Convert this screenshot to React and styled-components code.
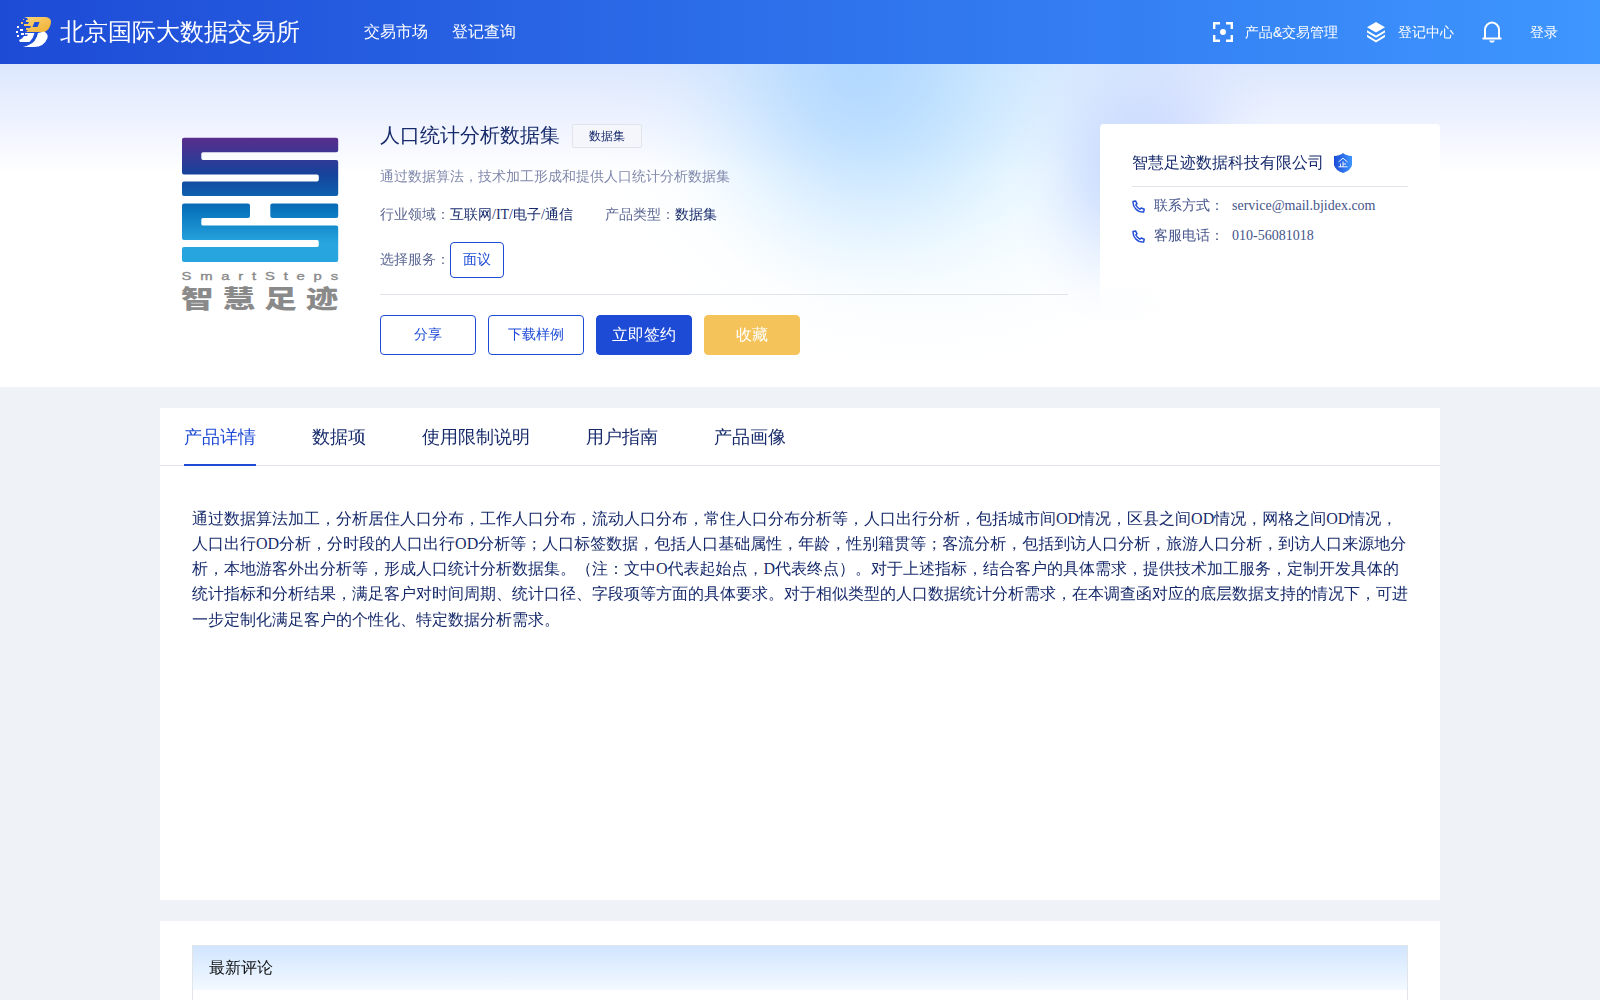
import React, { useState } from "react"
import styled, { createGlobalStyle } from "styled-components"

const GlobalStyle = createGlobalStyle`
  * {
    box-sizing: border-box;
  }
  body {
    margin: 0;
    background: #eff3f8;
    color: #172b6b;
    font-family: "Liberation Serif", "Droid Sans Fallback", "WenQuanYi Zen Hei",
      "Noto Sans CJK SC", serif;
    font-size: 14px;
    line-height: 22px;
    text-spacing-trim: space-all;
    overflow: hidden;
  }
  button {
    font-family: inherit;
    cursor: pointer;
  }
`

const tabs = ["产品详情", "数据项", "使用限制说明", "用户指南", "产品画像"]

const contacts = [
  { label: "联系方式：", value: "service@mail.bjidex.com" },
  { label: "客服电话：", value: "010-56081018" },
]

// soft spot of light with a bell-shaped falloff
const glow = (size, position, rgb, alpha) => {
  const stops = [1, 0.92, 0.76, 0.55, 0.34, 0.17, 0.06, 0]
    .map((k, i) => `rgba(${rgb}, ${k * alpha}) ${(i * 100) / 7}%`)
    .join(", ")
  return `radial-gradient(ellipse ${size} at ${position}, ${stops})`
}

const BrandLogo = () => (
  <svg width="36" height="32" viewBox="0 0 36 32">
    <defs>
      <linearGradient id="gold" x1="0" y1="0" x2="1" y2="1">
        <stop offset="0" stopColor="#f9d47a" />
        <stop offset="1" stopColor="#f0b030" />
      </linearGradient>
    </defs>
    <path
      fill="url(#gold)"
      fillRule="evenodd"
      d="M8 1H28Q35.500 1 35 6.500Q34 14 28 16H10L12 14H10V12H14L15 10H8V8H12L13 6H10V4H12L11 2ZM18.500 6L16.500 11H21.500L23.500 6Z"
    />
    <path
      fill="#fff"
      d="M9 17H18.500Q17.500 22 13.500 26H4L3 24L6 22.500L8 20H11L12 18.500H9ZM22 17L28 15.500Q32.500 17.500 31.500 22Q28 31 18 31H7Q14.500 29 18.500 25Q21 21.500 22 17Z"
    />
    <path
      fill="#fff"
      d="M1 10h2v2H1zM4 13h3v2H4zM0 15h2v2H0zM5 17h3v2H5zM1 19h2v2H1z"
    />
    <path fill="#f6c65c" d="M5 6h2v2H5zM7 3h1v1H7z" />
  </svg>
)

const ScanIcon = () => (
  <svg width="20" height="20" viewBox="0 0 20 20" fill="none" stroke="#fff">
    <path
      strokeWidth="2.4"
      d="M1.200 7V1.200H7M13 1.200H18.800V7M18.800 13V18.800H13M7 18.800H1.200V13"
    />
    <circle cx="10" cy="10" r="3" fill="#fff" stroke="none" />
  </svg>
)

const LayersIcon = () => (
  <svg width="20" height="22" viewBox="0 0 20 22" fill="#fff">
    <path d="M10 1L19 6.200L10 11.600L1 6.200Z" />
    <path d="M1 9.200L10 14.600L19 9.200V11.400L10 16.800L1 11.400Z" />
    <path d="M1 13.800L10 19.200L19 13.800V16L10 21.400L1 16Z" />
  </svg>
)

const BellIcon = () => (
  <svg width="20" height="22" viewBox="0 0 20 22" fill="none" stroke="#fff">
    <path strokeWidth="2" d="M3 17V9a7 7.500 0 0 1 14 0v8" />
    <path strokeWidth="2" d="M.5 17.500H19.500" />
    <path fill="#fff" stroke="none" d="M7 19.500h6q-1 2.200-3 2.200T7 19.500z" />
  </svg>
)

const ShieldIcon = () => (
  <svg width="18" height="20" viewBox="0 0 18 20">
    <defs>
      <linearGradient id="shield">
        <stop offset="0" stopColor="#1d4bd6" />
        <stop offset="1" stopColor="#3e95ff" />
      </linearGradient>
    </defs>
    <path
      fill="url(#shield)"
      d="M9 0Q12 2.600 18 3V12Q17 17 9 20Q1 17 0 12V3Q6 2.600 9 0Z"
    />
    <path
      fill="none"
      stroke="#fff"
      strokeWidth="0.9"
      d="M4.500 9L9 5.200L13.500 9M9 8.500V14M9 11H12M6.500 10.500V14M4.500 13.800H13.500"
    />
  </svg>
)

const PhoneIcon = () => (
  <svg width="13" height="13" viewBox="0 0 13 13" fill="none">
    <path
      stroke="#2450d8"
      strokeWidth="1.500"
      strokeLinejoin="round"
      d="M1 1.500L3.500 .9L5 3.800L3.800 5Q5.200 7.600 7.900 9.200L9.200 8L12.200 9.300L11.600 12Q7 12.300 3.800 9Q.8 6 1 1.500Z"
    />
  </svg>
)

const SmartStepsLogo = () => (
  <svg width="200" height="200" viewBox="160 124 200 200">
    <defs>
      <linearGradient
        id="steps"
        gradientUnits="userSpaceOnUse"
        x1="0"
        y1="137"
        x2="0"
        y2="262"
      >
        <stop offset="0" stopColor="#5b2d8c" />
        <stop offset="0.3" stopColor="#15439b" />
        <stop offset="0.58" stopColor="#0873bb" />
        <stop offset="0.85" stopColor="#27a5df" />
        <stop offset="1" stopColor="#27a5df" />
      </linearGradient>
    </defs>
    <g
      fill="url(#steps)"
      stroke="url(#steps)"
      strokeWidth="4"
      strokeLinejoin="round"
    >
      <path d="M184 139.700H336.200V150.300H203Q199.300 150.300 199.300 154V158Q199.300 162 203 162H336.200V194H184V183.500H317Q320.800 183.500 320.800 179V176.500Q320.800 172.500 317 172.500H184Z" />
      <path d="M184 205.500H248V216H203Q199.300 216 199.300 219.500V224Q199.300 227.500 203 227.500H336.200V260H184V249H317Q320.800 249 320.800 245V242Q320.800 238 317 238H184Z" />
      <path d="M272.300 205.500H336.200V216H272.300Z" />
    </g>
    <g fill="#8a8a8a" fontFamily="Liberation Sans, sans-serif">
      <text
        fontSize="11"
        transform="translate(181.500 279.500) scale(1.35 1)"
        textLength="116"
        stroke="#8a8a8a"
        strokeWidth="0.35"
      >
        SmartSteps
      </text>
      <text
        fontFamily="Noto Sans CJK SC, sans-serif"
        fontSize="25"
        fontWeight="900"
        transform="translate(181 307.500) scale(1.3 1)"
        textLength="121"
      >
        智慧足迹
      </text>
    </g>
  </svg>
)

const App = () => {
  const [active, setActive] = useState(0)

  return (
    <>
      <GlobalStyle />
      <Header>
        <BrandLogo />
        <BrandName>北京国际大数据交易所</BrandName>
        <Nav>
          <a>交易市场</a>
          <a>登记查询</a>
        </Nav>
        <UserNav>
          <UserLink $gap="12px">
            <ScanIcon />
            产品&amp;交易管理
          </UserLink>
          <UserLink $gap="12px">
            <LayersIcon />
            登记中心
          </UserLink>
          <UserLink $gap="0">
            <BellIcon />
          </UserLink>
          <UserLink $gap="0">登录</UserLink>
        </UserNav>
      </Header>

      <Hero>
        <HeroInner>
          <SmartStepsLogo />
          <Info>
            <TitleRow>
              <h1>人口统计分析数据集</h1>
              <Tag>数据集</Tag>
            </TitleRow>
            <Summary>通过数据算法，技术加工形成和提供人口统计分析数据集</Summary>
            <Meta>
              <div>
                行业领域：<b>互联网/IT/电子/通信</b>
              </div>
              <div>
                产品类型：<b>数据集</b>
              </div>
            </Meta>
            <ServiceRow>
              选择服务：
              <Service>面议</Service>
            </ServiceRow>
            <Actions>
              <Action>分享</Action>
              <Action>下载样例</Action>
              <Action $fill="#1d4bd6">立即签约</Action>
              <Action $fill="#f4c35a">收藏</Action>
            </Actions>
          </Info>
          <Company>
            <CompanyName>
              智慧足迹数据科技有限公司
              <ShieldIcon />
            </CompanyName>
            {contacts.map(({ label, value }) => (
              <Contact key={label}>
                <PhoneIcon />
                <span>{label}</span>
                {value}
              </Contact>
            ))}
          </Company>
        </HeroInner>
      </Hero>

      <Details>
        <TabBar>
          {tabs.map((tab, i) => (
            <Tab key={tab} $active={i === active} onClick={() => setActive(i)}>
              {tab}
            </Tab>
          ))}
        </TabBar>
        <Article>
          通过数据算法加工，分析居住人口分布，工作人口分布，流动人口分布，常住人口分布分析等，人口出行分析，包括城市间OD情况，区县之间OD情况，网格之间OD情况，人口出行OD分析，分时段的人口出行OD分析等；人口标签数据，包括人口基础属性，年龄，性别籍贯等；客流分析，包括到访人口分析，旅游人口分析，到访人口来源地分析，本地游客外出分析等，形成人口统计分析数据集。（注：文中O代表起始点，D代表终点）。对于上述指标，结合客户的具体需求，提供技术加工服务，定制开发具体的统计指标和分析结果，满足客户对时间周期、统计口径、字段项等方面的具体要求。对于相似类型的人口数据统计分析需求，在本调查函对应的底层数据支持的情况下，可进一步定制化满足客户的个性化、特定数据分析需求。
        </Article>
      </Details>

      <Comments>
        <CommentBox>
          <CommentHead>最新评论</CommentHead>
        </CommentBox>
      </Comments>
    </>
  )
}

const Header = styled.header`
  height: 64px;
  padding: 0 42px 0 16px;
  display: flex;
  align-items: center;
  color: #fff;
  background: linear-gradient(90deg, #1d4bd6, #3e96ff);
`

const BrandName = styled.div`
  margin-left: 8px;
  font-size: 24px;
  line-height: 36px;
`

const Nav = styled.nav`
  margin-left: 64px;
  display: flex;
  gap: 24px;
  font-size: 16px;
`

const UserNav = styled.div`
  margin-left: auto;
  display: flex;
  align-items: center;
  gap: 28px;
  font-family: "Liberation Sans", "Droid Sans Fallback", "WenQuanYi Zen Hei",
    "Noto Sans CJK SC", sans-serif;
`

const UserLink = styled.div`
  display: flex;
  align-items: center;
  gap: ${({ $gap }) => $gap};
`

const Hero = styled.section`
  height: 323px;
  padding-top: 60px;
  background:
    ${glow("120px 110px", "1165px 65px", "203, 217, 255", 0.7)},
    ${glow("110px 155px", "1118px 110px", "203, 221, 255", 0.95)},
    ${glow("210px 240px", "860px 0", "168, 210, 255", 0.75)},
    ${glow("330px 280px", "920px 30px", "205, 237, 255", 0.75)},
    linear-gradient(180deg, #dce7fd 0, #eff3ff 60px, #fff 110px);
`

const HeroInner = styled.div`
  width: 1280px;
  margin: 0 auto;
  display: flex;
`

const Info = styled.div`
  width: 688px;
  margin: 0 32px 0 20px;
`

const TitleRow = styled.div`
  height: 24px;
  display: flex;
  align-items: center;
  gap: 12px;

  h1 {
    margin: 0;
    padding-bottom: 2px;
    font-size: 20px;
    font-weight: 400;
  }
`

const Tag = styled.span`
  width: 70px;
  height: 24px;
  border: 1px solid #e1e4e9;
  border-radius: 2px;
  background: #f4f6fb;
  font-size: 12px;
  text-align: center;
`

const Summary = styled.p`
  margin: 18px 0 16px;
  color: #8089ac;
`

const Meta = styled.div`
  display: flex;
  gap: 32px;
  color: #5b6792;

  b {
    color: #172b6b;
    font-weight: 400;
  }
`

const ServiceRow = styled.div`
  margin-top: 16px;
  padding-bottom: 16px;
  display: flex;
  align-items: center;
  color: #5b6792;
  border-bottom: 1px solid #e1e4e9;
`

const Service = styled.button`
  width: 54px;
  height: 36px;
  padding: 0;
  border: 1px solid #1d4bd6;
  border-radius: 4px;
  background: #fff;
  color: #1d4bd6;
  font-size: 14px;
`

const Actions = styled.div`
  margin-top: 20px;
  display: flex;
  gap: 12px;
`

const Action = styled.button`
  width: 96px;
  height: 40px;
  padding: 0;
  border: 1px solid ${({ $fill }) => $fill || "#1d4bd6"};
  border-radius: 4px;
  background: ${({ $fill }) => $fill || "#fff"};
  color: ${({ $fill }) => ($fill ? "#fff" : "#1d4bd6")};
  font-size: ${({ $fill }) => ($fill ? "16px" : "14px")};
`

const Company = styled.aside`
  width: 340px;
  height: 200px;
  padding: 24px 32px;
  border-radius: 4px;
  background: linear-gradient(180deg, #fff 0, #fff 80%, rgba(255, 255, 255, 0));
`

const CompanyName = styled.div`
  height: 39px;
  margin-bottom: 4px;
  padding-bottom: 8px;
  display: flex;
  align-items: center;
  gap: 10px;
  font-size: 16px;
  border-bottom: 1px solid #e1e4e9;
`

const Contact = styled.div`
  height: 30px;
  display: flex;
  align-items: center;
  color: #45548a;

  svg {
    margin: 1px 9px 0 0;
  }
  span {
    margin-right: 8px;
  }
`

const Details = styled.section`
  width: 1280px;
  height: 492px;
  margin: 21px auto;
  background: #fff;
`

const TabBar = styled.div`
  height: 58px;
  padding: 0 24px;
  display: flex;
  gap: 56px;
  border-bottom: 1px solid #e1e4e9;
`

const Tab = styled.button`
  height: 58px;
  padding: 2px 0 0;
  border: none;
  border-bottom: 2px solid
    ${({ $active }) => ($active ? "#1d4bd6" : "transparent")};
  background: none;
  color: ${({ $active }) => ($active ? "#1d4bd6" : "#172b6b")};
  font-size: 18px;
`

const Article = styled.p`
  margin: 0;
  padding: 40px 32px;
  font-size: 16px;
  line-height: 25.14px;
`

const Comments = styled.section`
  width: 1280px;
  height: 79px;
  margin: 0 auto;
  padding: 24px 32px 0;
  background: #fff;
  overflow: hidden;
`

const CommentBox = styled.div`
  height: 120px;
  border: 1px solid #e1e4e9;
`

const CommentHead = styled.div`
  height: 44px;
  padding: 0 16px;
  color: #111;
  font-size: 16px;
  line-height: 44px;
  background: linear-gradient(180deg, #d1e5ff, #f3f9ff);
`

export default App
